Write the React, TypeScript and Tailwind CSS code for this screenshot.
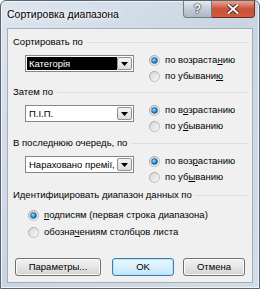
import React, { useId } from "react";

function Radio({ checked }: { checked?: boolean }) {
  const id = useId().replace(/:/g, "");
  return (
    <svg width="11" height="11" viewBox="0 0 11 11" className="shrink-0">
      <defs>
        <linearGradient id={`b${id}`} x1="0" y1="0" x2="1" y2="1">
          <stop offset="0" stopColor="#a0a0a0" />
          <stop offset="1" stopColor="#c8c8c8" />
        </linearGradient>
        <linearGradient id={`f${id}`} x1="0" y1="0" x2="1" y2="1">
          <stop offset="0" stopColor="#d4d4d4" />
          <stop offset="1" stopColor="#fafafa" />
        </linearGradient>
        <radialGradient id={`d${id}`} cx="0.4" cy="0.4" r="0.7">
          <stop offset="0" stopColor="#9fe0ff" />
          <stop offset="0.5" stopColor="#2a8fd6" />
          <stop offset="1" stopColor="#0f4f8c" />
        </radialGradient>
      </defs>
      <circle cx="5.5" cy="5.5" r="5" fill={`url(#f${id})`} stroke={`url(#b${id})`} strokeWidth="1" />
      {checked && <circle cx="5.5" cy="5.5" r="3" fill={`url(#d${id})`} stroke="#1b4f80" strokeWidth="0.5" />}
    </svg>
  );
}

function RadioRow({
  checked,
  children,
  h = "h-[16px]",
}: {
  checked?: boolean;
  children: React.ReactNode;
  h?: string;
}) {
  return (
    <div className={`flex items-center gap-[5px] ${h}`}>
      <Radio checked={checked} />
      <span className="whitespace-nowrap">{children}</span>
    </div>
  );
}

function Combo({ text, selected }: { text: string; selected?: boolean }) {
  return (
    <div className="w-[109px] h-[17px] border border-[#7f8790] bg-white flex items-stretch p-[1px] shrink-0">
      <div
        className={
          "flex-1 overflow-hidden whitespace-nowrap leading-[13px] pl-[2px] " +
          (selected ? "bg-black text-white" : "text-black")
        }
      >
        {text}
      </div>
      <div className="w-[15px] border border-[#8d939a] rounded-[2px] bg-gradient-to-b from-[#f4f4f4] to-[#dcdcdc] flex items-center justify-center">
        <svg width="7" height="4" viewBox="0 0 7 4">
          <path d="M0 0 H7 L3.5 4 Z" fill="#000" />
        </svg>
      </div>
    </div>
  );
}

function GroupLabel({ children }: { children: React.ReactNode }) {
  return (
    <div className="h-[13px] flex items-center">
      <span className="whitespace-nowrap">{children}</span>
      <div className="flex-1 ml-[4px] mr-[5px] border-t border-[#d5dfe5]" />
    </div>
  );
}

function Section({
  label,
  combo,
  selected,
  r1,
  r2,
  className = "",
}: {
  label: React.ReactNode;
  combo: string;
  selected?: boolean;
  r1: React.ReactNode;
  r2: React.ReactNode;
  className?: string;
}) {
  return (
    <div className={className}>
      <GroupLabel>{label}</GroupLabel>
      <div className="flex mt-[3px]">
        <div className="ml-[12px] mt-[3px]">
          <Combo text={combo} selected={selected} />
        </div>
        <div className="ml-[15px] flex flex-col">
          <RadioRow checked>{r1}</RadioRow>
          <RadioRow>{r2}</RadioRow>
        </div>
      </div>
    </div>
  );
}

function Btn({
  children,
  w,
  def,
  className = "",
}: {
  children: React.ReactNode;
  w: string;
  def?: boolean;
  className?: string;
}) {
  return (
    <div
      className={
        `${w} h-[18px] rounded-[3px] border flex items-center justify-center shrink-0 ` +
        (def
          ? "border-[#3c7fb1] bg-gradient-to-b from-[#eaf6fd] via-[#d9f0fc] to-[#bee6fd] shadow-[inset_0_0_0_1px_#b8e0f7] "
          : "border-[#707070] bg-gradient-to-b from-[#f2f2f2] via-[#e6e6e6] to-[#d2d2d2] shadow-[inset_0_0_0_1px_#fcfcfc] ") +
        className
      }
    >
      {children}
    </div>
  );
}

export default function App() {
  return (
    <div className="w-[260px] h-[289px] [font-family:Liberation_Sans,Arial,sans-serif] text-[9.5px] text-black">
      <div className="w-[260px] h-[289px] flex flex-col border border-[#5a6570] rounded-t-[6px] bg-gradient-to-br from-[#dde6ef] via-[#c9d5e1] to-[#d3dde8] shadow-[inset_0_0_0_1px_#eef3f8]">
        <div className="h-[27px] flex items-start relative">
          <div className="pl-[6px] pt-[6px] text-[10.5px] leading-[15px] [text-shadow:0_0_6px_#ffffff,0_0_3px_#ffffff]">
            Сортировка диапазона
          </div>
          <div className="ml-auto mr-[4px] flex">
            <div className="w-[29px] h-[17px] rounded-bl-[4px] border border-t-0 border-[#6f7b88] bg-gradient-to-b from-[#e6ebf0] via-[#c4ccd5] to-[#aeb8c3] flex items-center justify-center text-white font-bold text-[12px] [text-shadow:0_0_1px_#333,0_0_1px_#333,0_0_2px_#333]">
              ?
            </div>
            <div className="w-[43px] h-[17px] rounded-br-[4px] border border-t-0 border-l-0 border-[#6e2a20] bg-gradient-to-b from-[#e8a493] via-[#c9503a] to-[#d2593e] flex items-center justify-center">
              <svg width="12" height="10" viewBox="0 0 12 10">
                <path d="M1.5 1 L10.5 9 M10.5 1 L1.5 9" stroke="#3a1a14" strokeWidth="3.6" strokeLinecap="square" />
                <path d="M1.5 1 L10.5 9 M10.5 1 L1.5 9" stroke="#ffffff" strokeWidth="2" strokeLinecap="square" />
              </svg>
            </div>
          </div>
        </div>
        <div className="flex-1 mx-[6px] mb-[5px] border border-[#a3aebb] bg-[#f0f0f0] flex flex-col pl-[5px] pt-[7px]">
          <Section
            label="Сортировать по"
            combo="Категорія"
            selected
            r1={<>по возраста<u>н</u>ию</>}
            r2={<>по убывани<u>ю</u></>}
          />
          <Section
            className="mt-[2px]"
            label="Затем по"
            combo="П.І.П."
            r1={<>по в<u>о</u>зрастанию</>}
            r2={<>по у<u>б</u>ыванию</>}
          />
          <Section
            className="mt-[3px]"
            label="В последнюю очередь, по"
            combo="Нараховано премії,"
            r1={<>по воз<u>р</u>астанию</>}
            r2={<>по уб<u>ы</u>ванию</>}
          />
          <div className="mt-[4px]">
            <GroupLabel>Идентифицировать диапазон данных по</GroupLabel>
            <div className="mt-[5px] ml-[15px] flex flex-col">
              <RadioRow checked h="h-[17px]">
                <u>п</u>одписям (первая строка диапазона)
              </RadioRow>
              <RadioRow h="h-[17px]">
                обозна<u>ч</u>ениям столбцов листа
              </RadioRow>
            </div>
          </div>
          <div className="flex mt-[17px]">
            <Btn w="w-[86px]" className="ml-[2px]">Параметры...</Btn>
            <Btn w="w-[62px]" def className="ml-[11px]">OK</Btn>
            <Btn w="w-[62px]" className="ml-[9px]">Отмена</Btn>
          </div>
        </div>
      </div>
    </div>
  );
}
